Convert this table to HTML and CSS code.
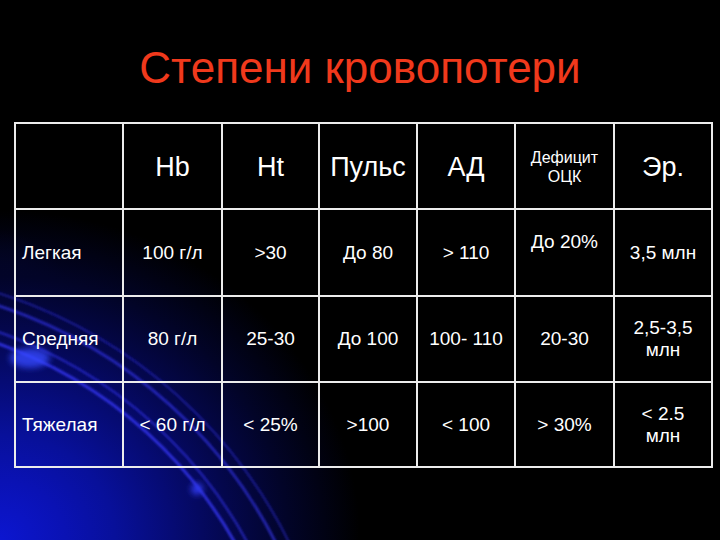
FILE: index.html
```html
<!DOCTYPE html>
<html lang="ru">
<head>
<meta charset="utf-8">
<title>Степени кровопотери</title>
<link rel="stylesheet" href="styles.css">
</head>
<body>
<div class="slide">
  <svg class="decor" width="720" height="540" viewBox="0 0 720 540" aria-hidden="true">
    <defs>
      <filter id="soft" x="-20%" y="-20%" width="140%" height="140%">
        <feGaussianBlur stdDeviation="1.2"/>
      </filter>
      <filter id="glow" x="-50%" y="-50%" width="200%" height="200%">
        <feGaussianBlur stdDeviation="3"/>
      </filter>
    </defs>
    <g fill="none" filter="url(#soft)">
      <circle cx="-150" cy="760" r="442" stroke="#3838ff" stroke-width="3" stroke-opacity="0.75"/>
      <circle cx="-150" cy="760" r="453" stroke="#3030e8" stroke-width="2.5" stroke-opacity="0.6"/>
      <circle cx="-150" cy="760" r="478" stroke="#3535f5" stroke-width="3" stroke-opacity="0.6"/>
      <circle cx="-150" cy="760" r="490" stroke="#2828d0" stroke-width="2.5" stroke-opacity="0.5"/>
    </g>
    <g filter="url(#glow)">
      <ellipse cx="30" cy="358" rx="20" ry="10" fill="#3448ff" fill-opacity="0.8"/>
      <circle cx="197" cy="489" r="6" fill="#3038f0" fill-opacity="0.95"/>
    </g>
  </svg>
  <h1 class="title">Степени кровопотери</h1>
  <table class="grid">
    <colgroup>
      <col class="c1"><col class="c2"><col class="c3"><col class="c4"><col class="c5"><col class="c6"><col class="c7">
    </colgroup>
    <tr class="head">
      <td></td>
      <td>Hb</td>
      <td>Ht</td>
      <td>Пульс</td>
      <td>АД</td>
      <td class="small">Дефицит<br>ОЦК</td>
      <td>Эр.</td>
    </tr>
    <tr class="r1">
      <td class="name">Легкая</td>
      <td>100 г/л</td>
      <td>&gt;30</td>
      <td>До 80</td>
      <td>&gt; 110</td>
      <td class="raised">До 20%</td>
      <td>3,5 млн</td>
    </tr>
    <tr class="r2">
      <td class="name">Средняя</td>
      <td>80 г/л</td>
      <td>25-30</td>
      <td>До 100</td>
      <td>100- 110</td>
      <td>20-30</td>
      <td class="two">2,5-3,5<br>млн</td>
    </tr>
    <tr class="r3">
      <td class="name">Тяжелая</td>
      <td>&lt; 60 г/л</td>
      <td>&lt; 25%</td>
      <td>&gt;100</td>
      <td>&lt; 100</td>
      <td>&gt; 30%</td>
      <td class="two">&lt; 2.5<br>млн</td>
    </tr>
  </table>
</div>
</body>
</html>
```

FILE: styles.css
```css
html, body {
  margin: 0;
  padding: 0;
  background: #000;
}

.slide {
  position: relative;
  width: 720px;
  height: 540px;
  overflow: hidden;
  background:
    radial-gradient(ellipse 360px 330px at 0% 100%, #0c16d0 0%, #0a12b4 18%, #08109a 32%, #060b74 48%, #04074c 64%, #020428 80%, rgba(0,0,0,0) 100%),
    radial-gradient(ellipse 90px 140px at 0% 370px, rgba(24,36,190,0.55) 0%, rgba(0,0,0,0) 100%),
    #000;
  font-family: "Liberation Sans", Arial, sans-serif;
  color: #fff;
}

.decor {
  position: absolute;
  left: 0;
  top: 0;
  z-index: 0;
}

.title {
  position: relative;
  z-index: 1;
  margin: 0;
  padding-top: 43px;
  height: 50px;
  line-height: 50px;
  font-size: 44px;
  font-weight: normal;
  text-align: center;
  color: #f0391c;
}

.grid {
  position: relative;
  z-index: 1;
  margin: 29px 0 0 14px;
  width: 697px;
  border-collapse: collapse;
  table-layout: fixed;
}

.c1 { width: 108px; }
.c2 { width: 99px; }
.c3 { width: 97px; }
.c4 { width: 98px; }
.c5 { width: 98px; }
.c6 { width: 99px; }
.c7 { width: 98px; }

.grid td {
  border: 2px solid #ececec;
  padding: 0;
  text-align: center;
  vertical-align: middle;
  font-size: 19px;
  line-height: 22px;
  color: #fff;
}

.head { height: 86px; }
.r1 { height: 87px; }
.r2 { height: 86px; }
.r3 { height: 85px; }

.head td {
  font-size: 27px;
  line-height: 30px;
  padding-top: 2px;
}

.head td.small {
  font-size: 16px;
  line-height: 19px;
}

.grid td.name {
  text-align: left;
  padding-left: 6px;
}

.grid td.raised {
  padding-bottom: 22px;
}
```
